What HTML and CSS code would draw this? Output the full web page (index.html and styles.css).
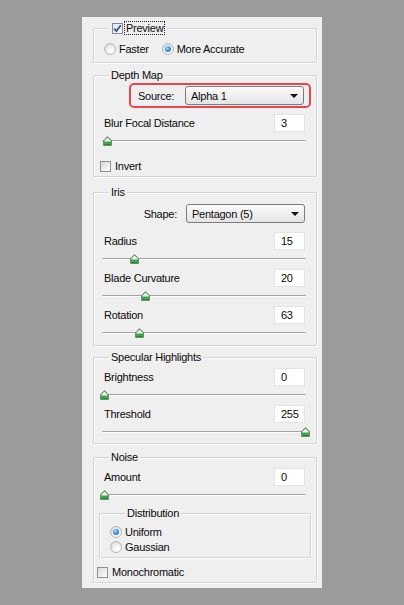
FILE: index.html
```html
<!DOCTYPE html>
<html>
<head>
<meta charset="utf-8">
<link rel="stylesheet" href="styles.css">
</head>
<body>
<div class="panel">

  <div class="group g1">
    <div class="legend legend-check">
      <span class="cb"><svg width="9" height="9" viewBox="0 0 9 9"><path d="M1.2 4.6 L3.4 7 L7.8 1.3" fill="none" stroke="#2f4fb0" stroke-width="1.8"/></svg></span>
      <span class="focus">Preview</span>
    </div>
    <div class="radio-row">
      <div class="opt"><span class="radio"></span>Faster</div>
      <div class="opt"><span class="radio on"></span>More Accurate</div>
    </div>
  </div>

  <div class="group g2">
    <div class="legend">Depth Map</div>
    <div class="source-box">
      <span>Source:</span>
      <div class="select"><span>Alpha 1</span><i class="arrow"></i></div>
    </div>
    <div class="field first">
      <div class="field-row"><span>Blur Focal Distance</span><span class="input">3</span></div>
      <div class="slider"><span class="thumb" style="left:1px"><svg width="9" height="10" viewBox="0 0 9 10"><path d="M4.5 .5 L8.5 4.5 V9.5 H.5 V4.5 Z" fill="#38ab45" stroke="#738a76"/><path d="M4.5 1.5 L7.5 4.5 V5.5 H1.5 V4.5 Z" fill="#f4f4f4"/><path d="M1.5 8.5 H7.5" stroke="#1f8a2e"/></svg></span></div>
    </div>
    <div class="check-row invert"><span class="cb"></span>Invert</div>
  </div>

  <div class="group g3">
    <div class="legend">Iris</div>
    <div class="shape-row">
      <span>Shape:</span>
      <div class="select"><span>Pentagon (5)</span><i class="arrow"></i></div>
    </div>
    <div class="field first-iris">
      <div class="field-row"><span>Radius</span><span class="input">15</span></div>
      <div class="slider"><span class="thumb" style="left:28px"><svg width="9" height="10" viewBox="0 0 9 10"><path d="M4.5 .5 L8.5 4.5 V9.5 H.5 V4.5 Z" fill="#38ab45" stroke="#738a76"/><path d="M4.5 1.5 L7.5 4.5 V5.5 H1.5 V4.5 Z" fill="#f4f4f4"/><path d="M1.5 8.5 H7.5" stroke="#1f8a2e"/></svg></span></div>
    </div>
    <div class="field">
      <div class="field-row"><span>Blade Curvature</span><span class="input">20</span></div>
      <div class="slider"><span class="thumb" style="left:39px"><svg width="9" height="10" viewBox="0 0 9 10"><path d="M4.5 .5 L8.5 4.5 V9.5 H.5 V4.5 Z" fill="#38ab45" stroke="#738a76"/><path d="M4.5 1.5 L7.5 4.5 V5.5 H1.5 V4.5 Z" fill="#f4f4f4"/><path d="M1.5 8.5 H7.5" stroke="#1f8a2e"/></svg></span></div>
    </div>
    <div class="field">
      <div class="field-row"><span>Rotation</span><span class="input">63</span></div>
      <div class="slider"><span class="thumb" style="left:33px"><svg width="9" height="10" viewBox="0 0 9 10"><path d="M4.5 .5 L8.5 4.5 V9.5 H.5 V4.5 Z" fill="#38ab45" stroke="#738a76"/><path d="M4.5 1.5 L7.5 4.5 V5.5 H1.5 V4.5 Z" fill="#f4f4f4"/><path d="M1.5 8.5 H7.5" stroke="#1f8a2e"/></svg></span></div>
    </div>
  </div>

  <div class="group g4">
    <div class="legend">Specular Highlights</div>
    <div class="field first-sub">
      <div class="field-row"><span>Brightness</span><span class="input">0</span></div>
      <div class="slider"><span class="thumb" style="left:-2px"><svg width="9" height="10" viewBox="0 0 9 10"><path d="M4.5 .5 L8.5 4.5 V9.5 H.5 V4.5 Z" fill="#38ab45" stroke="#738a76"/><path d="M4.5 1.5 L7.5 4.5 V5.5 H1.5 V4.5 Z" fill="#f4f4f4"/><path d="M1.5 8.5 H7.5" stroke="#1f8a2e"/></svg></span></div>
    </div>
    <div class="field">
      <div class="field-row"><span>Threshold</span><span class="input">255</span></div>
      <div class="slider"><span class="thumb" style="left:199px"><svg width="9" height="10" viewBox="0 0 9 10"><path d="M4.5 .5 L8.5 4.5 V9.5 H.5 V4.5 Z" fill="#38ab45" stroke="#738a76"/><path d="M4.5 1.5 L7.5 4.5 V5.5 H1.5 V4.5 Z" fill="#f4f4f4"/><path d="M1.5 8.5 H7.5" stroke="#1f8a2e"/></svg></span></div>
    </div>
  </div>

  <div class="group g5">
    <div class="legend">Noise</div>
    <div class="field first-sub">
      <div class="field-row"><span>Amount</span><span class="input">0</span></div>
      <div class="slider"><span class="thumb" style="left:-2px"><svg width="9" height="10" viewBox="0 0 9 10"><path d="M4.5 .5 L8.5 4.5 V9.5 H.5 V4.5 Z" fill="#38ab45" stroke="#738a76"/><path d="M4.5 1.5 L7.5 4.5 V5.5 H1.5 V4.5 Z" fill="#f4f4f4"/><path d="M1.5 8.5 H7.5" stroke="#1f8a2e"/></svg></span></div>
    </div>
    <div class="group sub">
      <div class="legend">Distribution</div>
      <div class="opt stack first-opt"><span class="radio on"></span>Uniform</div>
      <div class="opt stack"><span class="radio"></span>Gaussian</div>
    </div>
    <div class="check-row mono"><span class="cb"></span>Monochromatic</div>
  </div>

</div>
</body>
</html>
```

FILE: styles.css
```css
html, body {
  margin: 0;
  padding: 0;
}

body {
  background: #9b9b9b;
  font-family: "Liberation Sans", Arial, sans-serif;
  font-size: 11px;
  letter-spacing: -0.25px;
  color: #0a0a0a;
}

.panel {
  margin: 17px 0 0 82px;
  width: 240px;
  height: 571px;
  box-sizing: border-box;
  background: #efefef;
  padding: 11px 5px 0 11px;
  overflow: hidden;
}

.group {
  border: 1px solid #d2d4d6;
  box-shadow: inset 1px 1px 0 #fbfbfb, 1px 1px 0 #fbfbfb;
}

.legend {
  width: fit-content;
  height: 13px;
  line-height: 13px;
  margin: -7px 0 0 15px;
  padding: 0 2px;
  background: #efefef;
}

/* group 1 */
.g1 {
  padding-bottom: 7px;
}

.legend-check {
  display: flex;
  align-items: center;
  height: 14px;
  margin-top: -8px;
  padding-left: 3px;
}

.focus {
  margin-left: 1px;
  padding: 0 1px;
  height: 12px;
  line-height: 12px;
  border: 1px dotted #222;
}

.radio-row {
  display: flex;
  gap: 13px;
  height: 13px;
  margin-top: 7px;
  padding-left: 10px;
}

.opt {
  display: flex;
  align-items: center;
}

.radio {
  position: relative;
  width: 12px;
  height: 12px;
  box-sizing: border-box;
  border-radius: 50%;
  border: 1px solid #b4b6b8;
  background: radial-gradient(circle at 65% 70%, #ffffff 10%, #e2e2e2 70%, #cfcfcf);
  margin-right: 3px;
  flex: none;
}

.radio.on::after {
  content: "";
  position: absolute;
  left: 2px;
  top: 2px;
  width: 6px;
  height: 6px;
  border-radius: 50%;
  background: radial-gradient(circle at 40% 35%, #b8e6ff 0, #3ea0e0 40%, #0b5a98 100%);
}

.cb {
  display: flex;
  align-items: center;
  justify-content: center;
  width: 11px;
  height: 11px;
  box-sizing: border-box;
  border: 1px solid #8d9096;
  background: linear-gradient(135deg, #d8d8d8, #ffffff);
  flex: none;
}

.legend-check .cb {
  border-color: #7b8aa3;
  background: linear-gradient(135deg, #e4e4e4, #ffffff);
}

/* group 2 */
.g2 {
  margin-top: 12px;
  padding-bottom: 4px;
}

.source-box {
  width: 182px;
  height: 25px;
  box-sizing: border-box;
  border: 2px solid #e8464c;
  border-radius: 5px;
  margin: 1px 0 0 35px;
  display: flex;
  align-items: center;
  justify-content: space-between;
  padding: 0 5px 0 7px;
}

.select {
  width: 119px;
  height: 19px;
  box-sizing: border-box;
  border: 1px solid #7c7c7c;
  border-radius: 3px;
  background: linear-gradient(#fbfbfb, #e4e4e4);
  display: flex;
  align-items: center;
  justify-content: space-between;
  padding: 0 5px 0 5px;
}

.arrow {
  width: 0;
  height: 0;
  border-left: 4px solid transparent;
  border-right: 4px solid transparent;
  border-top: 4px solid #111;
}

.field {
  margin-top: 5px;
}

.field.first {
  margin-top: 6px;
}

.field.first-iris {
  margin-top: 9px;
}

.field.first-sub {
  margin-top: 4px;
}

.field-row {
  display: flex;
  align-items: center;
  justify-content: space-between;
  height: 18px;
  padding: 0 11px 0 10px;
}

.input {
  width: 31px;
  height: 18px;
  box-sizing: border-box;
  background: #fff;
  border: 1px solid #e4e4e4;
  padding-left: 6px;
  line-height: 16px;
}

.slider {
  position: relative;
  height: 11px;
  margin: 3px 10px 0 8px;
}

.slider::before {
  content: "";
  position: absolute;
  left: 0;
  right: 0;
  top: 5px;
  height: 1px;
  background: #a3a3a3;
  border-bottom: 1px solid #fff;
  border-radius: 1px;
}

.thumb {
  position: absolute;
  top: 1px;
  width: 9px;
  height: 10px;
}

.thumb svg {
  display: block;
}

.check-row {
  display: flex;
  align-items: center;
  height: 12px;
}

.check-row .cb {
  margin-right: 4px;
}

.invert {
  margin-top: 14px;
  padding-left: 6px;
}

/* group 3 */
.g3 {
  margin-top: 15px;
  padding-bottom: 7px;
}

.shape-row {
  display: flex;
  align-items: center;
  justify-content: flex-end;
  gap: 9px;
  height: 19px;
  margin-top: 5px;
  padding-right: 11px;
}

/* group 4 */
.g4 {
  margin-top: 11px;
  padding-bottom: 6px;
}

/* group 5 */
.g5 {
  margin-top: 13px;
  padding-bottom: 4px;
}

.sub {
  margin: 13px 5px 0 5px;
  padding: 0 0 3px 10px;
}

.opt.stack {
  height: 15px;
}

.opt.first-opt {
  margin-top: 4px;
}

.mono {
  margin-top: 8px;
  padding-left: 3px;
}
```
